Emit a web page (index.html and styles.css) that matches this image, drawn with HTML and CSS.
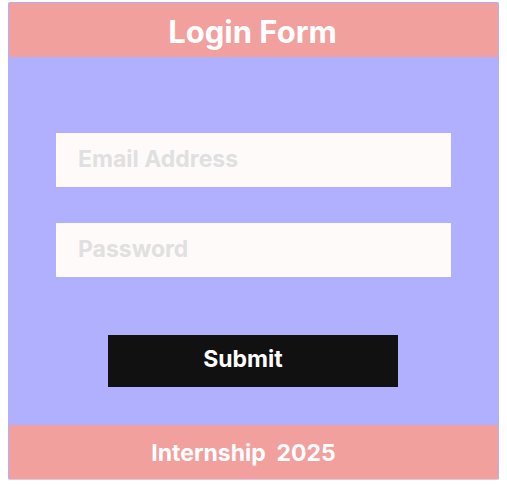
FILE: index.html
```html
<!DOCTYPE html>
<html lang="en">
<head>
<meta charset="utf-8">
<meta name="viewport" content="width=device-width, initial-scale=1">
<title>Login Form</title>
<link rel="stylesheet" href="styles.css">
</head>
<body>
<main class="card">
  <header class="card-header"><h1 class="title">Login Form</h1></header>
  <form class="form">
    <input class="field" type="email" placeholder="Email Address" aria-label="Email Address">
    <input class="field" type="password" placeholder="Password" aria-label="Password">
    <button class="submit" type="submit">Submit</button>
  </form>
  <footer class="card-footer">Internship&nbsp; 2025</footer>
</main>
</body>
</html>
```

FILE: styles.css
```css
* {
  box-sizing: border-box;
}

body {
  margin: 0;
  padding: 2px 8px 4px;
  background: #ffffff;
  font-family: Inter, "Liberation Sans", sans-serif;
}

.card {
  border: 1px solid #b0b0ff;
  border-bottom-color: #e4c4e0;
  border-radius: 2px;
  background: #b0b0ff;
  overflow: hidden;
}

.card-header,
.card-footer {
  background: #f2a09e;
  color: #ffffff;
  text-align: center;
}

.card-header {
  padding: 9px 2px 5px 0;
}

.title {
  margin: 0;
  font-size: 31px;
  line-height: 40px;
  font-weight: 700;
}

.form {
  display: flex;
  flex-direction: column;
  gap: 36px;
  padding: 76px 47px 38px;
}

.field {
  width: 100%;
  height: 54px;
  margin: 0;
  padding: 0 22px 2px;
  border: 0;
  border-radius: 0;
  background: #fffafa;
  color: #111111;
  font: 700 23px/32px Inter, "Liberation Sans", sans-serif;
}

.field::placeholder {
  color: #e0e0e0;
  opacity: 1;
}

.submit {
  height: 52px;
  margin: 22px 53px 0 52px;
  padding: 0 20px 4px 0;
  border: 0;
  background: #111111;
  color: #ffffff;
  font: 700 23px/32px Inter, "Liberation Sans", sans-serif;
}

.card-footer {
  padding: 12px 20px 10px 0;
  font-size: 23px;
  line-height: 32px;
  font-weight: 700;
}
```
